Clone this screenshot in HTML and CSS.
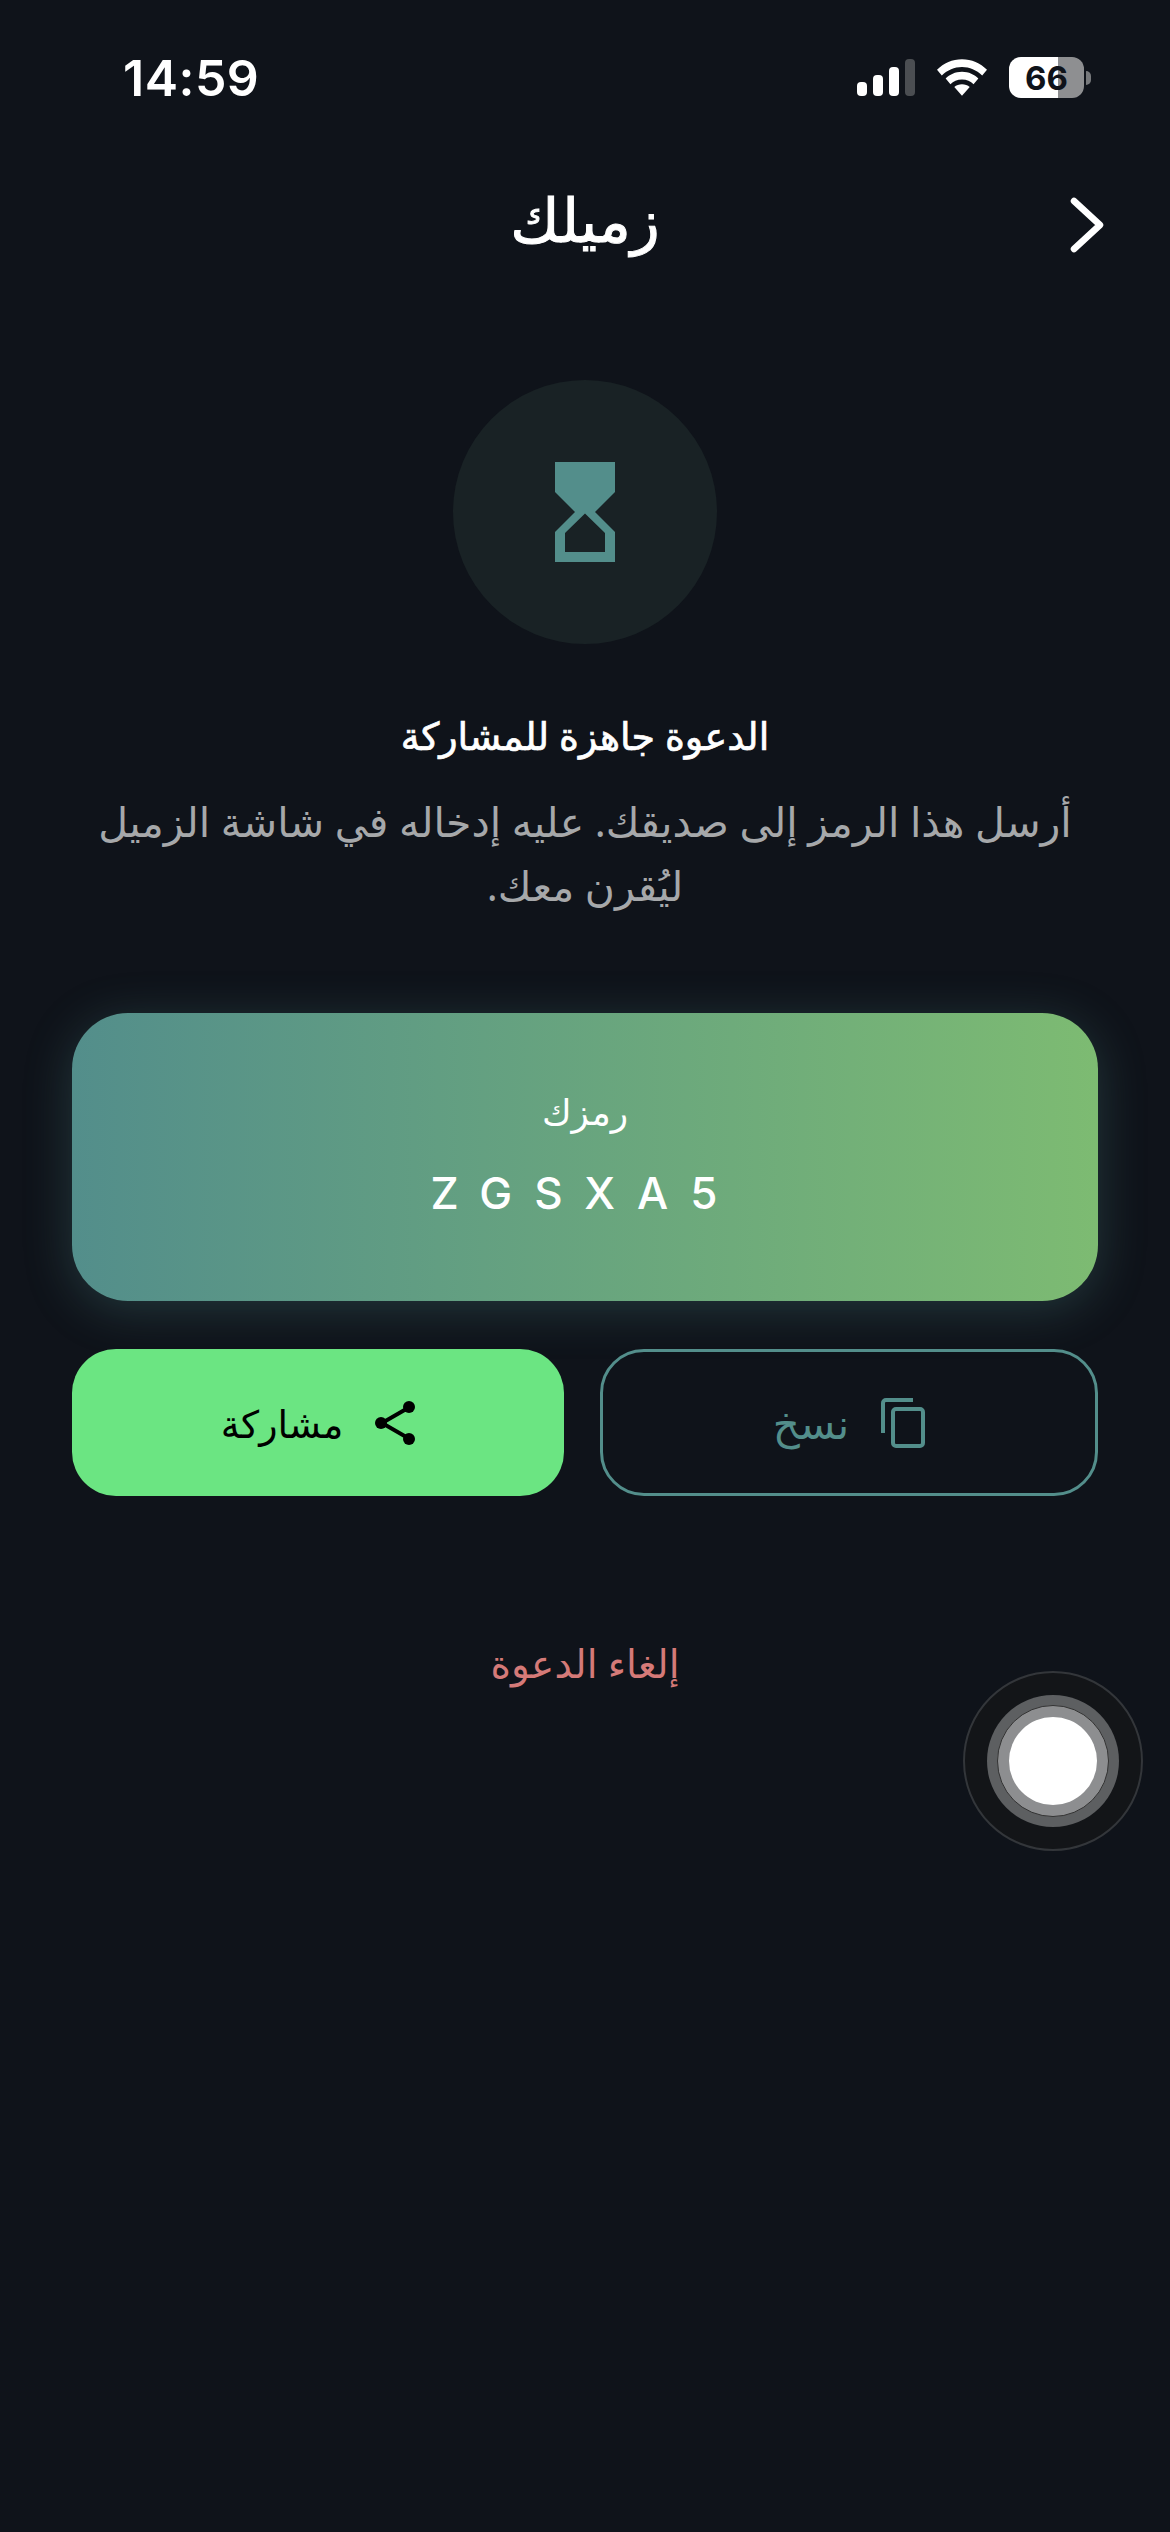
FILE: index.html
```html
<!DOCTYPE html>
<html lang="ar" dir="rtl">

<head>
  <meta charset="utf-8">
  <link rel="stylesheet" href="styles.css">
</head>

<body>
  <div class="status-bar" dir="ltr">
    <span class="time">14:59</span>
    <div class="status-icons">
      <svg class="signal" width="58" height="37" viewBox="0 0 58 37">
        <rect x="0" y="23" width="10" height="14" rx="4" fill="#fff"/>
        <rect x="16" y="16" width="10" height="21" rx="4" fill="#fff"/>
        <rect x="32" y="8" width="10" height="29" rx="4" fill="#fff"/>
        <rect x="48" y="0" width="10" height="37" rx="4" fill="#4b4e52"/>
      </svg>
      <svg class="wifi" width="50" height="37" viewBox="0 0 52 38">
        <path d="M26 0C16 0 7 4 0 11l5 6C11 11 18 8 26 8s15 3 21 9l5-6C45 4 36 0 26 0z" fill="#fff"/>
        <path d="M26 13c-7 0-13 3-17 7l5 6c3-3 7-5 12-5s9 2 12 5l5-6c-4-4-10-7-17-7z" fill="#fff"/>
        <path d="M26 26c-3 0-6 1-8 3l8 9 8-9c-2-2-5-3-8-3z" fill="#fff"/>
      </svg>
      <div class="battery">
        <div class="battery-body"><span>66</span></div>
        <div class="battery-tip"></div>
      </div>
    </div>
  </div>

  <div class="nav">
    <h1>زميلك</h1>
    <svg class="back" width="34" height="56" viewBox="0 0 34 56">
      <path d="M4 4l26 24L4 52" fill="none" stroke="#fff" stroke-width="6.5" stroke-linecap="round" stroke-linejoin="round"/>
    </svg>
  </div>

  <div class="content">
    <div class="hourglass">
      <svg width="60" height="100" viewBox="0 0 60 100">
        <path fill-rule="evenodd" d="M0 0h60v30L40 50l20 20v30H0V70l20-20L0 30zM30 51.5L10 71v19h40V71z" fill="#538e8b"/>
      </svg>
    </div>
    <h2>الدعوة جاهزة للمشاركة</h2>
    <p class="desc">أرسل هذا الرمز إلى صديقك. عليه إدخاله في شاشة الزميل ليُقرن معك.</p>

    <div class="code-card">
      <div class="code-label">رمزك</div>
      <div class="code-value" dir="ltr">ZGSXA5</div>
    </div>

    <div class="actions">
      <button class="btn btn-copy">
        <svg width="44" height="50" viewBox="0 0 44 50">
          <path d="M32 2H5a3 3 0 0 0-3 3v30" fill="none" stroke="#538e8b" stroke-width="4"/>
          <rect x="12" y="11" width="30" height="37" rx="3" fill="none" stroke="#538e8b" stroke-width="4"/>
        </svg>
        <span>نسخ</span>
      </button>
      <button class="btn btn-share">
        <svg width="40" height="44" viewBox="0 0 40 44">
          <path d="M33 7L7 22l26 15" fill="none" stroke="#000" stroke-width="4"/>
          <circle cx="34" cy="6" r="6"/>
          <circle cx="6" cy="22" r="6"/>
          <circle cx="34" cy="38" r="6"/>
        </svg>
        <span>مشاركة</span>
      </button>
    </div>

    <div class="cancel">إلغاء الدعوة</div>
  </div>

  <div class="assistive">
    <div class="ring-mid">
      <div class="ring-inner">
        <div class="knob"></div>
      </div>
    </div>
  </div>
</body>

</html>
```

FILE: styles.css
```css
html, body {
  margin: 0;
  padding: 0;
}

body {
  width: 1170px;
  height: 2532px;
  overflow: hidden;
  position: relative;
  background-color: #0f131a;
  font-family: 'Noto Sans', 'DejaVu Sans', sans-serif;
  color: #fff;
}

.status-bar {
  height: 156px;
  box-sizing: border-box;
  padding: 53px 79px 0 123px;
  display: flex;
  justify-content: space-between;
  align-items: flex-start;
}

.time {
  font-family: 'Inter', sans-serif;
  font-size: 50px;
  font-weight: 600;
  line-height: 50px;
  letter-spacing: 0.5px;
}

.status-icons {
  display: flex;
  align-items: center;
  gap: 22px;
  padding-top: 4px;
}

.battery {
  display: flex;
  align-items: center;
  gap: 2px;
}

.battery-body {
  width: 75px;
  height: 41px;
  border-radius: 12px;
  background: linear-gradient(to right, #fff 66%, #8e8f91 66%);
  display: flex;
  align-items: center;
  justify-content: center;
  color: #0f131a;
  font-family: 'Inter', sans-serif;
  font-size: 33px;
  font-weight: 700;
}

.battery-tip {
  width: 5px;
  height: 14px;
  background-color: #77797c;
  border-radius: 0 6px 6px 0;
}

.nav {
  height: 136px;
  display: flex;
  align-items: center;
  justify-content: center;
  position: relative;
}

.nav h1 {
  margin: 0 0 10px;
  font-size: 60px;
  font-weight: 400;
  line-height: 1;
  -webkit-text-stroke: 1px #fff;
}

.back {
  position: absolute;
  right: 66px;
  top: 41px;
}

.content {
  padding: 88px 72px 0;
  display: flex;
  flex-direction: column;
  align-items: center;
}

.hourglass {
  width: 264px;
  height: 264px;
  border-radius: 50%;
  background-color: #192225;
  display: flex;
  align-items: center;
  justify-content: center;
}

.content h2 {
  margin: 64px 0 0;
  font-size: 38px;
  font-weight: 400;
  line-height: 54px;
  -webkit-text-stroke: 0.7px #fff;
}

.desc {
  margin: 27px 0 0;
  width: 100%;
  color: #a6a8aa;
  font-size: 41px;
  line-height: 64px;
  text-align: center;
  font-weight: 400;
}

.code-card {
  margin-top: 96px;
  width: 100%;
  height: 288px;
  border-radius: 56px;
  background: linear-gradient(to right, #538e8b, #7dbb72);
  box-shadow: 0 8px 48px rgba(83, 142, 139, 0.3);
  display: flex;
  flex-direction: column;
  align-items: center;
  padding-top: 75px;
  box-sizing: border-box;
}

.code-label {
  font-size: 36px;
  line-height: 48px;
}

.code-value {
  margin-top: 32px;
  font-family: 'Inter', sans-serif;
  font-size: 44px;
  font-weight: 500;
  letter-spacing: 22px;
  line-height: 50px;
}

.actions {
  margin-top: 48px;
  width: 100%;
  display: flex;
  gap: 36px;
}

.btn {
  flex: 1;
  height: 147px;
  border-radius: 44px;
  box-sizing: border-box;
  display: flex;
  align-items: center;
  justify-content: center;
  gap: 32px;
  font-family: inherit;
  font-size: 38px;
  padding: 0;
}

.btn-share {
  background-color: #6be582;
  border: none;
  color: #000;
}

.btn-copy {
  background: none;
  border: 3px solid #538e8b;
  color: #538e8b;
  font-size: 42px;
}

.cancel {
  margin-top: 140px;
  color: #d57a78;
  font-size: 39px;
  line-height: 54px;
}

.assistive {
  position: absolute;
  left: 963px;
  top: 1671px;
  width: 180px;
  height: 180px;
  box-sizing: border-box;
  border-radius: 50%;
  background-color: #131518;
  border: 2px solid #33363a;
  display: flex;
  align-items: center;
  justify-content: center;
}

.ring-mid {
  width: 132px;
  height: 132px;
  border-radius: 50%;
  background-color: #5d5f61;
  display: flex;
  align-items: center;
  justify-content: center;
}

.ring-inner {
  width: 112px;
  height: 112px;
  box-sizing: border-box;
  border-radius: 50%;
  background-color: #8d8e90;
  border: 1px solid #333;
  display: flex;
  align-items: center;
  justify-content: center;
}

.knob {
  width: 88px;
  height: 88px;
  border-radius: 50%;
  background-color: #fff;
}
```
